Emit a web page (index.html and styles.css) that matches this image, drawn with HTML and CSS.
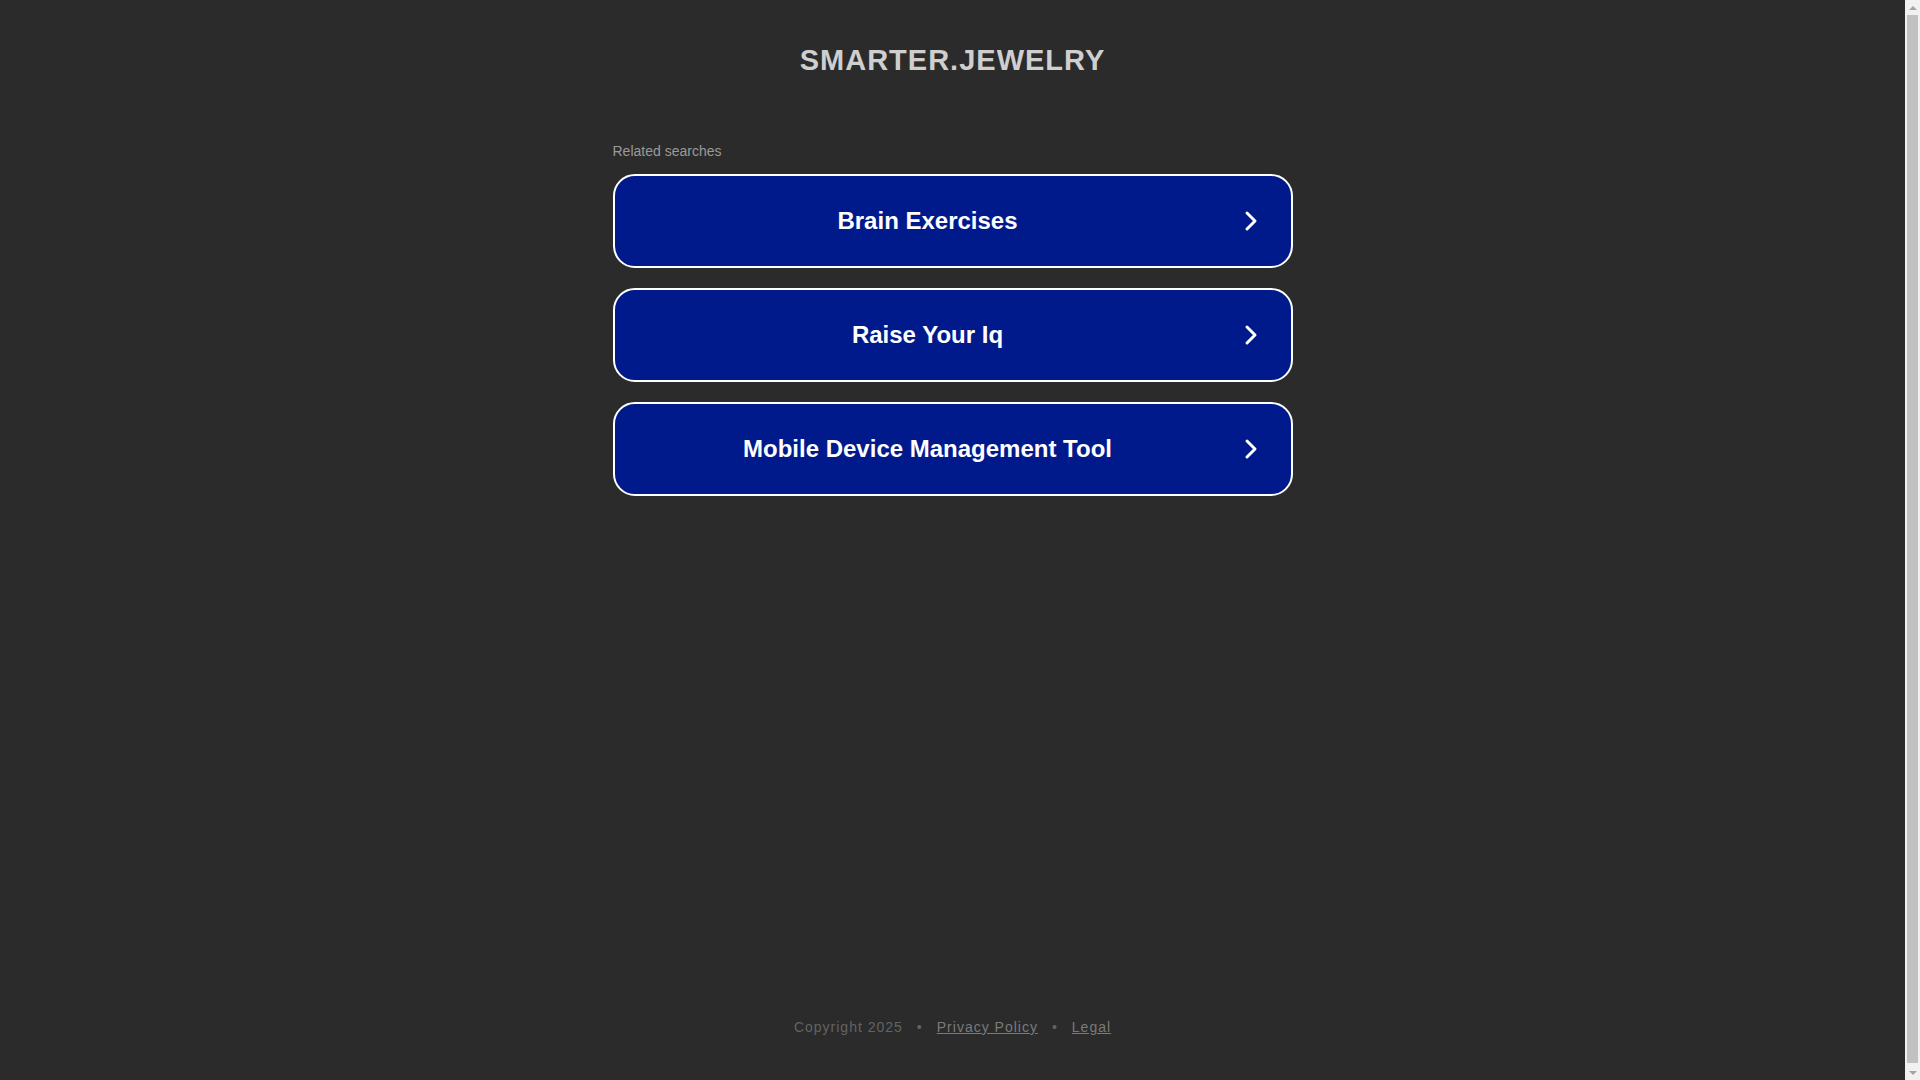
FILE: index.html
```html
<!DOCTYPE html>
<html lang="en">
<head>
<meta charset="utf-8">
<title>smarter.jewelry</title>
<link rel="stylesheet" href="styles.css">
</head>
<body>
<div class="page">
  <header class="header">
    <h1 class="title">SMARTER.JEWELRY</h1>
  </header>
  <main class="main">
    <p class="related">Related searches</p>
    <div class="list">
      <a class="item" href="#">
        <span class="label">Brain Exercises</span>
        <svg class="arrow" viewBox="0 0 20 22" width="20" height="22"><path d="M6 3 L14 11 L6 19" fill="none" stroke="#fff" stroke-width="3" stroke-linecap="round" stroke-linejoin="round"/></svg>
      </a>
      <a class="item" href="#">
        <span class="label">Raise Your Iq</span>
        <svg class="arrow" viewBox="0 0 20 22" width="20" height="22"><path d="M6 3 L14 11 L6 19" fill="none" stroke="#fff" stroke-width="3" stroke-linecap="round" stroke-linejoin="round"/></svg>
      </a>
      <a class="item" href="#">
        <span class="label">Mobile Device Management Tool</span>
        <svg class="arrow" viewBox="0 0 20 22" width="20" height="22"><path d="M6 3 L14 11 L6 19" fill="none" stroke="#fff" stroke-width="3" stroke-linecap="round" stroke-linejoin="round"/></svg>
      </a>
    </div>
  </main>
  <footer class="footer">
    <span class="copy">Copyright 2025</span>
    <span class="dot">•</span>
    <a class="flink" href="#">Privacy Policy</a>
    <span class="dot">•</span>
    <a class="flink" href="#">Legal</a>
  </footer>
</div>
<div class="scrollbar" aria-hidden="true">
  <span class="sb-btn sb-up"></span>
  <span class="sb-thumb"></span>
  <span class="sb-btn sb-down"></span>
</div>
</body>
</html>
```

FILE: styles.css
```css
html, body {
  margin: 0;
  padding: 0;
  background: #2b2b2b;
}
body {
  font-family: "Liberation Sans", Arial, sans-serif;
}
.page {
  display: flex;
  flex-direction: column;
  min-height: 100vh;
  margin-right: 15px;
  padding-bottom: 20px;
}
.header {
  padding-top: 42px;
  text-align: center;
}
.title {
  margin: 0;
  font-size: 29px;
  line-height: 36px;
  font-weight: bold;
  letter-spacing: 1px;
  color: #cfcfcf;
}
.main {
  width: 680px;
  margin: 64px auto 0;
}
.related {
  margin: 0 0 14px;
  font-size: 14px;
  line-height: 18px;
  color: #9a9a9a;
}
.list {
  display: flex;
  flex-direction: column;
  gap: 20px;
}
.item {
  display: flex;
  align-items: center;
  height: 94px;
  box-sizing: border-box;
  border: 2px solid #ffffff;
  border-radius: 22px;
  background: #011a8b;
  text-decoration: none;
  color: #ffffff;
}
.label {
  flex: 1;
  text-align: center;
  font-size: 24px;
  font-weight: bold;
  line-height: 30px;
}
.arrow {
  margin-right: 30px;
  flex: none;
}
.footer {
  margin-top: auto;
  padding-bottom: 43px;
  display: flex;
  justify-content: center;
  gap: 14px;
  font-size: 14px;
  line-height: 20px;
  letter-spacing: 1px;
}
.copy {
  color: #636363;
}
.dot {
  color: #636363;
}
.flink {
  color: #7a7a7a;
  text-decoration: underline;
}
.scrollbar {
  position: fixed;
  top: 0;
  right: 0;
  width: 15px;
  height: 100vh;
  background: #f1f1f1;
  display: flex;
  flex-direction: column;
  align-items: center;
}
.sb-btn {
  flex: none;
  width: 15px;
  height: 15px;
  display: flex;
  align-items: center;
  justify-content: center;
}
.sb-up::before {
  content: "";
  border-left: 4px solid transparent;
  border-right: 4px solid transparent;
  border-bottom: 4px solid #a3a3a3;
}
.sb-down::before {
  content: "";
  border-left: 4px solid transparent;
  border-right: 4px solid transparent;
  border-top: 4px solid #a3a3a3;
}
.sb-thumb {
  flex: 1;
  width: 11px;
  margin: 0 0 2px;
  background: #c1c1c1;
}
```
